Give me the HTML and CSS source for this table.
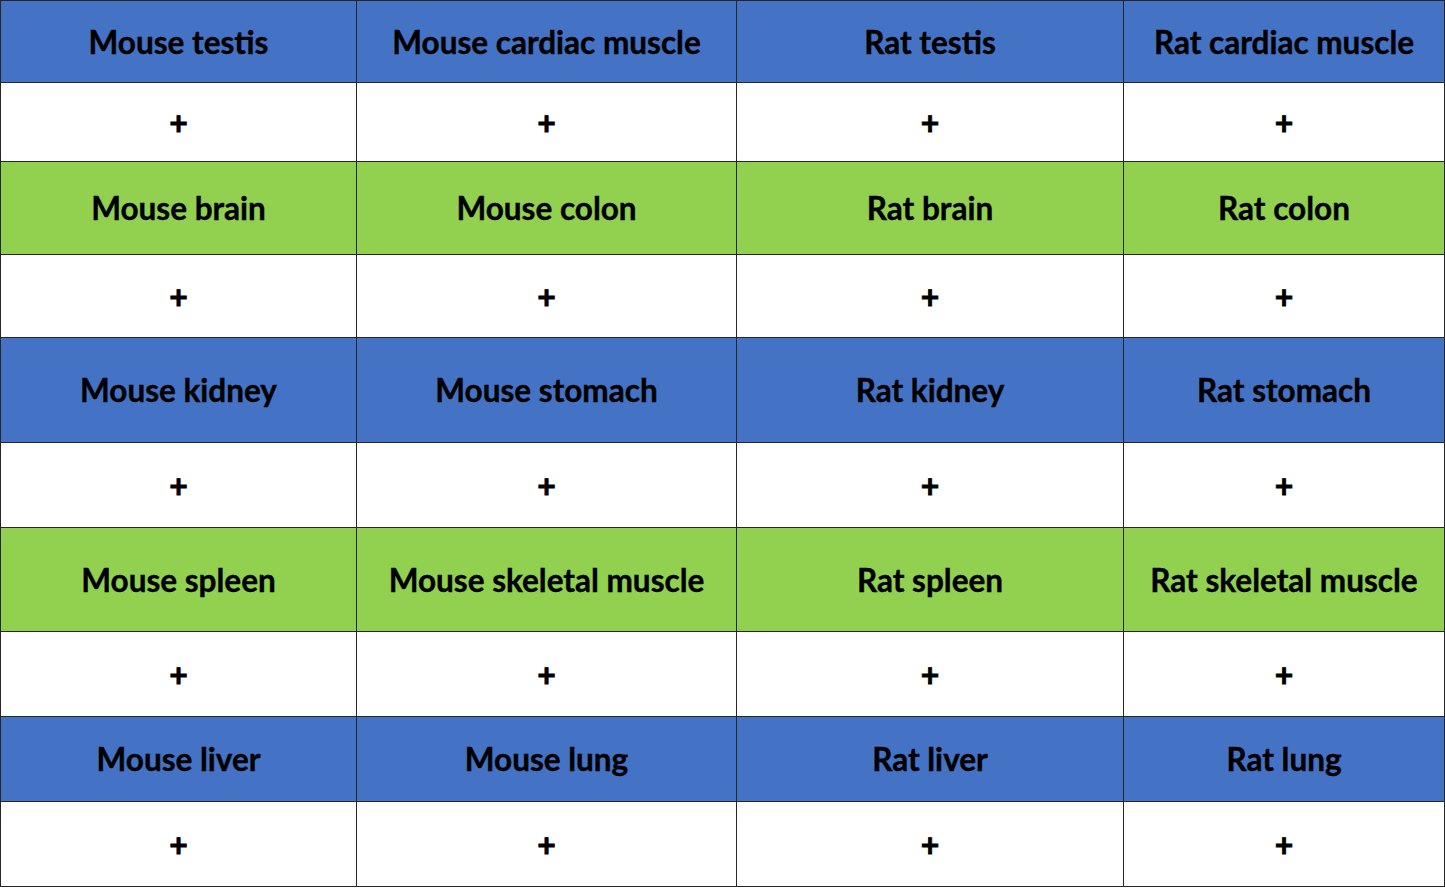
FILE: index.html
```html
<!DOCTYPE html>
<html lang="en">
<head>
<meta charset="utf-8">
<title>Tissue table</title>
<link rel="stylesheet" href="styles.css">
</head>
<body>
<div class="grid">
  <div class="cell head blue">Mouse testis</div>
  <div class="cell head blue">Mouse cardiac muscle</div>
  <div class="cell head blue">Rat testis</div>
  <div class="cell head blue">Rat cardiac muscle</div>
  <div class="cell plus">+</div>
  <div class="cell plus">+</div>
  <div class="cell plus">+</div>
  <div class="cell plus">+</div>

  <div class="cell head green">Mouse brain</div>
  <div class="cell head green">Mouse colon</div>
  <div class="cell head green">Rat brain</div>
  <div class="cell head green">Rat colon</div>
  <div class="cell plus">+</div>
  <div class="cell plus">+</div>
  <div class="cell plus">+</div>
  <div class="cell plus">+</div>

  <div class="cell head blue">Mouse kidney</div>
  <div class="cell head blue">Mouse stomach</div>
  <div class="cell head blue">Rat kidney</div>
  <div class="cell head blue">Rat stomach</div>
  <div class="cell plus">+</div>
  <div class="cell plus">+</div>
  <div class="cell plus">+</div>
  <div class="cell plus">+</div>

  <div class="cell head green">Mouse spleen</div>
  <div class="cell head green">Mouse skeletal muscle</div>
  <div class="cell head green">Rat spleen</div>
  <div class="cell head green">Rat skeletal muscle</div>
  <div class="cell plus">+</div>
  <div class="cell plus">+</div>
  <div class="cell plus">+</div>
  <div class="cell plus">+</div>

  <div class="cell head blue">Mouse liver</div>
  <div class="cell head blue">Mouse lung</div>
  <div class="cell head blue">Rat liver</div>
  <div class="cell head blue">Rat lung</div>
  <div class="cell plus">+</div>
  <div class="cell plus">+</div>
  <div class="cell plus">+</div>
  <div class="cell plus">+</div>
</div>
</body>
</html>
```

FILE: styles.css
```css
html, body {
  margin: 0;
  padding: 0;
  background: #ffffff;
}

.grid {
  display: grid;
  grid-template-columns: 356px 380px 387px 321px;
  grid-template-rows: 82px 79px 93px 83px 105px 85px 104px 85px 85px 85px;
  width: 1444px;
  border-top: 1px solid #262626;
  border-left: 1px solid #262626;
  font-family: "Lato", "Open Sans", sans-serif;
  font-weight: 700;
  color: #000000;
}

.cell {
  box-sizing: border-box;
  border-right: 1px solid #262626;
  border-bottom: 1px solid #262626;
  display: flex;
  align-items: center;
  justify-content: center;
  text-align: center;
}

.head {
  font-size: 31.5px;
  -webkit-text-stroke: 0.4px #000000;
}

.plus {
  font-size: 32px;
  padding-top: 1px;
  -webkit-text-stroke: 0.8px #000000;
}

.blue {
  background: #4472c4;
}

.green {
  background: #92d050;
}
```
